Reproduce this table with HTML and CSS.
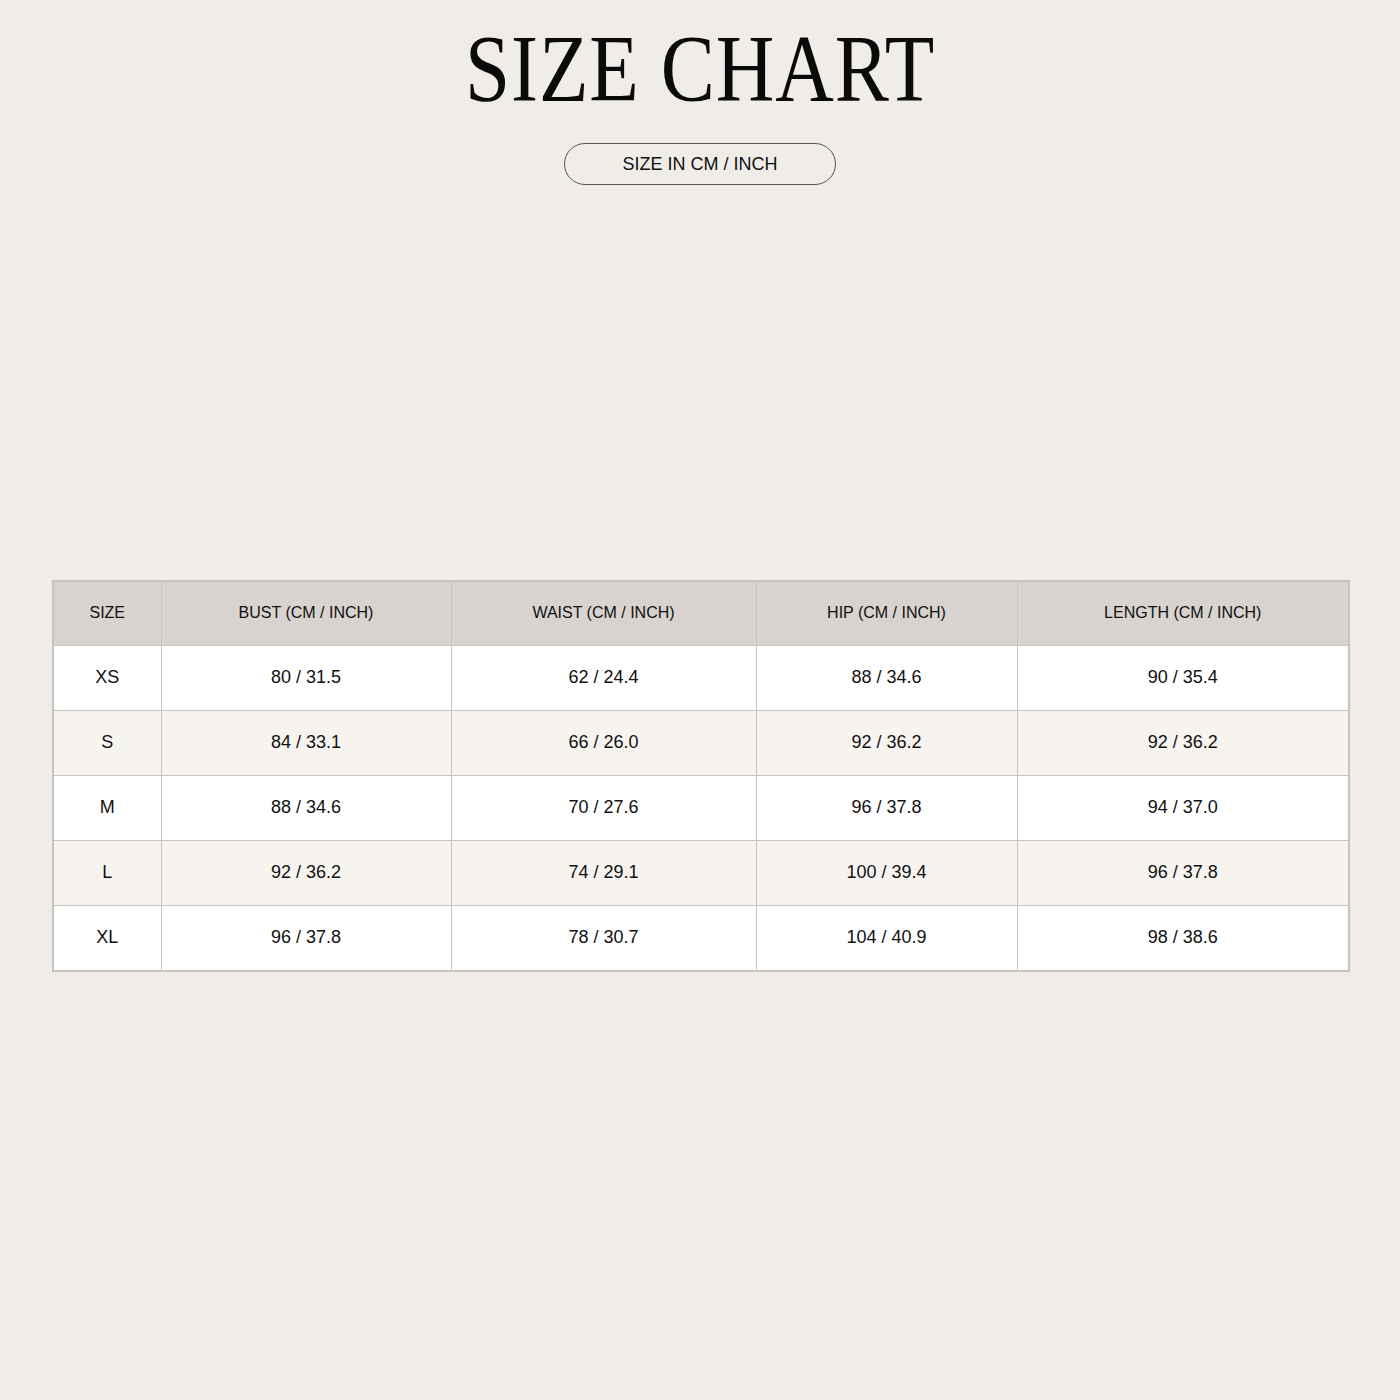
FILE: index.html
```html
<!DOCTYPE html>
<html>
<head>
<meta charset="utf-8">
<link rel="stylesheet" href="styles.css">
</head>
<body>
<div class="page">
  <header class="head">
    <h1 class="title"><span class="title-text">SIZE CHART</span></h1>
    <div class="pill">SIZE IN CM / INCH</div>
  </header>
  <table class="chart">
    <colgroup>
      <col class="c-size"><col class="c-bust"><col class="c-waist"><col class="c-hip"><col class="c-len">
    </colgroup>
    <thead>
      <tr><th>SIZE</th><th>BUST (CM / INCH)</th><th>WAIST (CM / INCH)</th><th>HIP (CM / INCH)</th><th>LENGTH (CM / INCH)</th></tr>
    </thead>
    <tbody>
      <tr><td>XS</td><td>80 / 31.5</td><td>62 / 24.4</td><td>88 / 34.6</td><td>90 / 35.4</td></tr>
      <tr><td>S</td><td>84 / 33.1</td><td>66 / 26.0</td><td>92 / 36.2</td><td>92 / 36.2</td></tr>
      <tr><td>M</td><td>88 / 34.6</td><td>70 / 27.6</td><td>96 / 37.8</td><td>94 / 37.0</td></tr>
      <tr><td>L</td><td>92 / 36.2</td><td>74 / 29.1</td><td>100 / 39.4</td><td>96 / 37.8</td></tr>
      <tr><td>XL</td><td>96 / 37.8</td><td>78 / 30.7</td><td>104 / 40.9</td><td>98 / 38.6</td></tr>
    </tbody>
  </table>
</div>
</body>
</html>
```
FILE: styles.css
```css
html, body {
  margin: 0;
  padding: 0;
  background: #f0ede8;
}
body {
  font-family: "Liberation Sans", Arial, sans-serif;
  color: #111;
}
.page {
  width: 1400px;
  height: 1400px;
  padding: 0 52px;
  box-sizing: border-box;
}
.head {
  display: flex;
  flex-direction: column;
  align-items: center;
  padding-top: 21px;
}
.title {
  margin: 0;
  font-family: "Liberation Serif", "Times New Roman", serif;
  font-weight: 400;
  font-size: 96px;
  line-height: 96px;
  color: #0a0a0a;
  height: 96px;
}
.title-text {
  display: inline-block;
  transform: scaleX(0.845);
  letter-spacing: 1px;
}
.pill {
  margin-top: 26px;
  width: 272px;
  height: 42px;
  box-sizing: border-box;
  border: 1px solid #5a5856;
  border-radius: 21px;
  display: flex;
  align-items: center;
  justify-content: center;
  font-size: 18px;
  color: #111;
}
.chart {
  margin-top: 395px;
  width: 1296px;
  border-collapse: collapse;
  table-layout: fixed;
  border: 2px solid #c7c3be;
}
.c-size { width: 108px; }
.c-bust { width: 290px; }
.c-waist { width: 305px; }
.c-hip { width: 261px; }
.c-len { width: 332px; }
.chart th, .chart td {
  border: 1px solid #c7c3be;
  padding: 0;
  text-align: center;
  vertical-align: middle;
  font-weight: 400;
}
.chart th {
  height: 61px;
  padding-bottom: 2px;
  background: #d8d3ce;
  font-size: 16px;
  color: #111;
}
.chart td {
  height: 62px;
  padding-bottom: 2px;
  font-size: 18px;
  color: #111;
}
.chart tbody tr:nth-child(odd) td { background: #ffffff; }
.chart tbody tr:nth-child(even) td { background: #f7f4ef; }
```
